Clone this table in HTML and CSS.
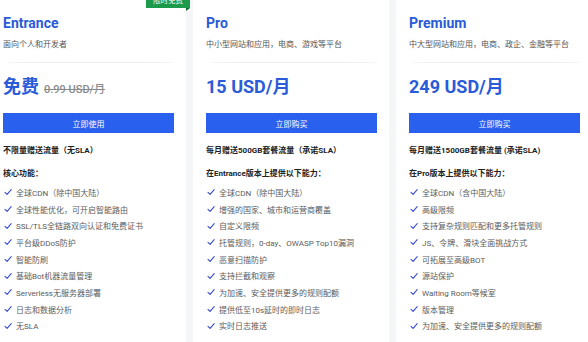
FILE: index.html
```html
<!DOCTYPE html>
<html lang="zh-CN">
<head>
<meta charset="utf-8">
<title>Plans</title>
<link rel="stylesheet" href="styles.css">
</head>
<body>
<main class="plans">
  <section class="card">
    <span class="badge">限时免费</span>
    <h2 class="title">Entrance</h2>
    <p class="desc">面向个人和开发者</p>
    <div class="divider"></div>
    <div class="price"><span class="amount">免费</span><s class="orig">0.99 USD/月</s></div>
    <button class="btn">立即使用</button>
    <p class="traffic">不限量赠送流量（无SLA）</p>
    <p class="feat-title">核心功能：</p>
    <ul class="features">
      <li><svg class="check" viewBox="0 0 8 8"><path d="M1 4.4 L3.1 6.4 L7.2 1.6"/></svg>全球CDN（除中国大陆）</li>
      <li><svg class="check" viewBox="0 0 8 8"><path d="M1 4.4 L3.1 6.4 L7.2 1.6"/></svg>全球性能优化，可开启智能路由</li>
      <li><svg class="check" viewBox="0 0 8 8"><path d="M1 4.4 L3.1 6.4 L7.2 1.6"/></svg>SSL/TLS全链路双向认证和免费证书</li>
      <li><svg class="check" viewBox="0 0 8 8"><path d="M1 4.4 L3.1 6.4 L7.2 1.6"/></svg>平台级DDoS防护</li>
      <li><svg class="check" viewBox="0 0 8 8"><path d="M1 4.4 L3.1 6.4 L7.2 1.6"/></svg>智能防刷</li>
      <li><svg class="check" viewBox="0 0 8 8"><path d="M1 4.4 L3.1 6.4 L7.2 1.6"/></svg>基础Bot机器流量管理</li>
      <li><svg class="check" viewBox="0 0 8 8"><path d="M1 4.4 L3.1 6.4 L7.2 1.6"/></svg>Serverless无服务器部署</li>
      <li><svg class="check" viewBox="0 0 8 8"><path d="M1 4.4 L3.1 6.4 L7.2 1.6"/></svg>日志和数据分析</li>
      <li><svg class="check" viewBox="0 0 8 8"><path d="M1 4.4 L3.1 6.4 L7.2 1.6"/></svg>无SLA</li>
    </ul>
  </section>
  <section class="card">
    <h2 class="title">Pro</h2>
    <p class="desc">中小型网站和应用，电商、游戏等平台</p>
    <div class="divider"></div>
    <div class="price"><span class="amount">15 USD/月</span></div>
    <button class="btn">立即购买</button>
    <p class="traffic">每月赠送500GB套餐流量（承诺SLA）</p>
    <p class="feat-title">在Entrance版本上提供以下能力：</p>
    <ul class="features">
      <li><svg class="check" viewBox="0 0 8 8"><path d="M1 4.4 L3.1 6.4 L7.2 1.6"/></svg>全球CDN（除中国大陆）</li>
      <li><svg class="check" viewBox="0 0 8 8"><path d="M1 4.4 L3.1 6.4 L7.2 1.6"/></svg>增强的国家、城市和运营商覆盖</li>
      <li><svg class="check" viewBox="0 0 8 8"><path d="M1 4.4 L3.1 6.4 L7.2 1.6"/></svg>自定义限频</li>
      <li><svg class="check" viewBox="0 0 8 8"><path d="M1 4.4 L3.1 6.4 L7.2 1.6"/></svg>托管规则，0-day、OWASP Top10漏洞</li>
      <li><svg class="check" viewBox="0 0 8 8"><path d="M1 4.4 L3.1 6.4 L7.2 1.6"/></svg>恶意扫描防护</li>
      <li><svg class="check" viewBox="0 0 8 8"><path d="M1 4.4 L3.1 6.4 L7.2 1.6"/></svg>支持拦截和观察</li>
      <li><svg class="check" viewBox="0 0 8 8"><path d="M1 4.4 L3.1 6.4 L7.2 1.6"/></svg>为加速、安全提供更多的规则配额</li>
      <li><svg class="check" viewBox="0 0 8 8"><path d="M1 4.4 L3.1 6.4 L7.2 1.6"/></svg>提供低至10s延时的即时日志</li>
      <li><svg class="check" viewBox="0 0 8 8"><path d="M1 4.4 L3.1 6.4 L7.2 1.6"/></svg>实时日志推送</li>
    </ul>
  </section>
  <section class="card">
    <h2 class="title">Premium</h2>
    <p class="desc">中大型网站和应用，电商、政企、金融等平台</p>
    <div class="divider"></div>
    <div class="price"><span class="amount">249 USD/月</span></div>
    <button class="btn">立即购买</button>
    <p class="traffic">每月赠送1500GB套餐流量 (承诺SLA)</p>
    <p class="feat-title">在Pro版本上提供以下能力：</p>
    <ul class="features">
      <li><svg class="check" viewBox="0 0 8 8"><path d="M1 4.4 L3.1 6.4 L7.2 1.6"/></svg>全球CDN（含中国大陆）</li>
      <li><svg class="check" viewBox="0 0 8 8"><path d="M1 4.4 L3.1 6.4 L7.2 1.6"/></svg>高级限频</li>
      <li><svg class="check" viewBox="0 0 8 8"><path d="M1 4.4 L3.1 6.4 L7.2 1.6"/></svg>支持复杂规则匹配和更多托管规则</li>
      <li><svg class="check" viewBox="0 0 8 8"><path d="M1 4.4 L3.1 6.4 L7.2 1.6"/></svg>JS、令牌、滑块全面挑战方式</li>
      <li><svg class="check" viewBox="0 0 8 8"><path d="M1 4.4 L3.1 6.4 L7.2 1.6"/></svg>可拓展至高级BOT</li>
      <li><svg class="check" viewBox="0 0 8 8"><path d="M1 4.4 L3.1 6.4 L7.2 1.6"/></svg>源站保护</li>
      <li><svg class="check" viewBox="0 0 8 8"><path d="M1 4.4 L3.1 6.4 L7.2 1.6"/></svg>Waiting Room等候室</li>
      <li><svg class="check" viewBox="0 0 8 8"><path d="M1 4.4 L3.1 6.4 L7.2 1.6"/></svg>版本管理</li>
      <li><svg class="check" viewBox="0 0 8 8"><path d="M1 4.4 L3.1 6.4 L7.2 1.6"/></svg>为加速、安全提供更多的规则配额</li>
    </ul>
  </section>
</main>
</body>
</html>
```

FILE: styles.css
```css
html, body {
  margin: 0;
  padding: 0;
}
body {
  background: #f5f6f8;
  font-family: Roboto, "Noto Sans CJK SC", sans-serif;
  overflow: hidden;
  width: 588px;
  height: 342px;
}
.plans {
  display: flex;
  gap: 7px;
  margin-left: -10px;
  width: max-content;
}
.card {
  position: relative;
  flex-shrink: 0;
  box-sizing: border-box;
  width: 196px;
  height: 342px;
  padding: 13px 12px 0 13px;
  background: #fff;
}
.badge {
  position: absolute;
  top: -7px;
  right: -4px;
  padding: 0 7px;
  background: #1c9a4c;
  color: #fff;
  font-size: 7.5px;
  line-height: 15px;
}
.badge::after {
  content: "";
  position: absolute;
  right: 0;
  bottom: -3px;
  border-top: 3px solid #0f6b33;
  border-right: 4px solid transparent;
}
.title {
  margin: 0;
  font-size: 14px;
  line-height: 20px;
  font-weight: 700;
  color: #2a5bd8;
}
.desc {
  margin: 6px 0 0;
  font-size: 8px;
  line-height: 12px;
  color: #555;
}
.divider {
  margin: 11px 0 0 4px;
  height: 1px;
  background: linear-gradient(90deg, #f6f6f6, #ececec 20%, #ececec 80%, #f6f6f6);
}
.price {
  display: flex;
  align-items: baseline;
  gap: 5px;
  margin-top: 12px;
  height: 24px;
  line-height: 24px;
}
.amount {
  font-size: 18px;
  font-weight: 700;
  color: #2a5bd8;
}
.orig {
  font-size: 11px;
  font-weight: 500;
  color: #8a8a8a;
}
.btn {
  display: block;
  width: 100%;
  height: 20px;
  margin-top: 14px;
  padding: 0;
  border: 0;
  background: #2a60ee;
  color: #fff;
  font-family: inherit;
  font-size: 8px;
}
.traffic,
.feat-title {
  margin: 12px 0 0;
  font-size: 8px;
  line-height: 12px;
  font-weight: 700;
  color: #222;
}
.feat-title {
  margin-top: 11px;
}
.features {
  list-style: none;
  margin: 4px 0 0;
  padding: 0;
}
.features li {
  display: flex;
  align-items: center;
  height: 16.7px;
  font-size: 8px;
  color: #5c5c5c;
  white-space: nowrap;
}
.check {
  width: 8px;
  height: 8px;
  margin: 0 4px 0 1px;
  flex-shrink: 0;
  fill: none;
  stroke: #3a4fd0;
  stroke-width: 1.1;
  stroke-linecap: round;
  stroke-linejoin: round;
}
```
